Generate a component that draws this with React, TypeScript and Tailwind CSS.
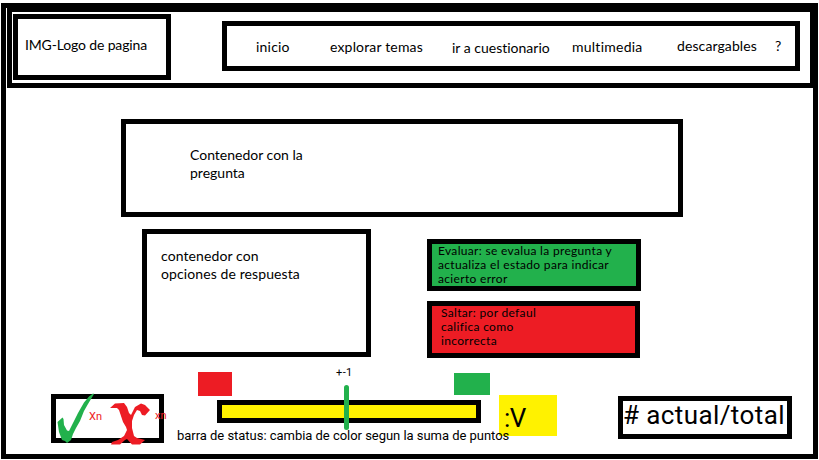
import React from "react";

const calibri = "font-['Lato',sans-serif] [font-variant-ligatures:none]";
const din = "font-['Roboto',sans-serif]";

function Header() {
  return (
    <header className="-mt-px ml-px flex h-[81px] w-[808px] shrink-0 border-5 border-black bg-white">
      <div className="ml-px mt-[2px] h-[66px] w-[158px] border-5 border-black pl-[7px] pt-[17px]">
        <div className="text-[14px] leading-[18px] tracking-[-0.15px]">IMG-Logo de pagina</div>
      </div>
      <nav className="ml-[51px] mt-[9px] flex h-[50px] w-[578px] border-5 border-black pt-[11px] text-[14px] leading-[18px]">
        <a className="ml-[29px] mt-px w-[74px] tracking-[0.2px]">inicio</a>
        <a className="mt-px w-[122px] tracking-[0.17px]">explorar temas</a>
        <a className="mt-[2px] w-[120px]">ir a cuestionario</a>
        <a className="mt-px w-[105px] tracking-[0.25px]">multimedia</a>
        <a className="w-[98px] tracking-[0.1px]">descargables</a>
        <a>?</a>
      </nav>
    </header>
  );
}

function Score() {
  return (
    <div className={`relative mt-[36px] ml-[45px] h-[49px] w-[113px] shrink-0 border-5 border-black text-[11px] leading-[14px] text-[#ed1c24] ${din}`}>
      <svg className="absolute -left-[5px] -top-[5px] overflow-visible" width="113" height="55" viewBox="51 394 113 55">
        <path
          fill="#22b14c"
          d="M57.5 422 L62.5 417.5 L63.5 419 L64 425 L67 430.5 L69 431 L73 423 L78 413 L84 402.5 L89 396.5 L93 393.5 L94 394 L88 404 L84 411 L80 421 L76 428 L73 434 L71 440 L67 443 L65 441 L62 440 L59 432 Z"
        />
        <path
          fill="#ed1c24"
          d="M110 408 L115 403.5 L124 403 L127 407 L129 413 L131 415 L135 407 L141 403.5 L145 405 L150 410 L145 415.5 L142 415 L140 411 L137 410 L134 415 L132 421 L132 428 L134 436 L137 438 L145 440 L140 444.5 L132 444.5 L127 439 L125 440 L120 444.5 L111 444.5 L112 442 L118 440 L124 436 L127 430 L126 427 L123 422 L119 410 L117 408 Z"
        />
      </svg>
      <span className="absolute left-[33px] top-[11px]">Xn</span>
      <span className="absolute left-[99px] top-[10px]">xn</span>
    </div>
  );
}

function StatusBar() {
  return (
    <div className="relative ml-[13px] flex w-[322px] shrink-0 flex-col">
      <div className="flex h-[42px] items-start pl-[21px] pt-[14px]">
        <div className="h-[24px] w-[34px] bg-[#ed1c24]" />
        <div className={`-mt-[6px] ml-[104px] w-[118px] text-[11px] leading-[14px] tracking-[0.4px] ${din}`}>+-1</div>
        <div className="mt-px h-[22px] w-[36px] bg-[#22b14c]" />
      </div>
      <div className="ml-[40px] h-[23px] w-[264px] border-5 border-black bg-[#fff200]" />
      <div className="absolute left-[167px] top-[27px] h-[45px] w-[5px] rounded-sm bg-[#22b14c]" />
      <div className={`relative z-10 mt-[5px] whitespace-nowrap text-[13px] leading-[16px] tracking-[-0.03px] ${din}`}>
        barra de status: cambia de color segun la suma de puntos
      </div>
    </div>
  );
}

export default function App() {
  return (
    <div className={`h-[460px] w-[819px] overflow-hidden bg-white pl-px pt-[3px] text-black ${calibri}`}>
      <div className="flex h-[456px] w-[817px] flex-col border-5 border-black">
        <Header />
        <section className="ml-[115px] mt-[31px] h-[98px] w-[562px] shrink-0 border-5 border-black pl-[64px] pt-[22px] text-[14px] leading-[18px]">
          Contenedor con la
          <br />
          pregunta
        </section>
        <div className="mt-[12px] flex h-[129px] shrink-0">
          <section className="ml-[136px] h-[128px] w-[229px] border-5 border-black pl-[14px] pt-[13px] text-[14px] leading-[18px] tracking-[0.1px]">
            contenedor con
            <br />
            opciones de respuesta
          </section>
          <div className="ml-[56px] mt-[10px] text-[12px] leading-[14px] tracking-[0.32px]">
            <button className="block h-[52px] w-[214px] border-5 border-black bg-[#22b14c] pl-[6px] text-left whitespace-nowrap">
              Evaluar: se evalua la pregunta y<br />
              actualiza el estado para indicar
              <br />
              acierto error
            </button>
            <button className="mt-[10px] block h-[57px] w-[213px] border-5 border-black bg-[#ed1c24] pl-[9px] pb-[5px] text-left whitespace-nowrap">
              Saltar: por defaul
              <br />
              califica como
              <br />
              incorrecta
            </button>
          </div>
        </div>
        <div className="flex h-[96px] shrink-0">
          <Score />
          <StatusBar />
          <div className={`mt-[37px] h-[41px] w-[58px] shrink-0 bg-[#fff200] pl-[5px] pt-[8px] text-[26px] leading-[30px] tracking-[-0.5px] ${din}`}>
            :V
          </div>
          <div className={`ml-[61px] mt-[38px] h-[43px] w-[174px] shrink-0 whitespace-nowrap border-5 border-black text-[26px] leading-[28px] tracking-[0.4px] ${din}`}>
            # actual/total
          </div>
        </div>
      </div>
    </div>
  );
}
